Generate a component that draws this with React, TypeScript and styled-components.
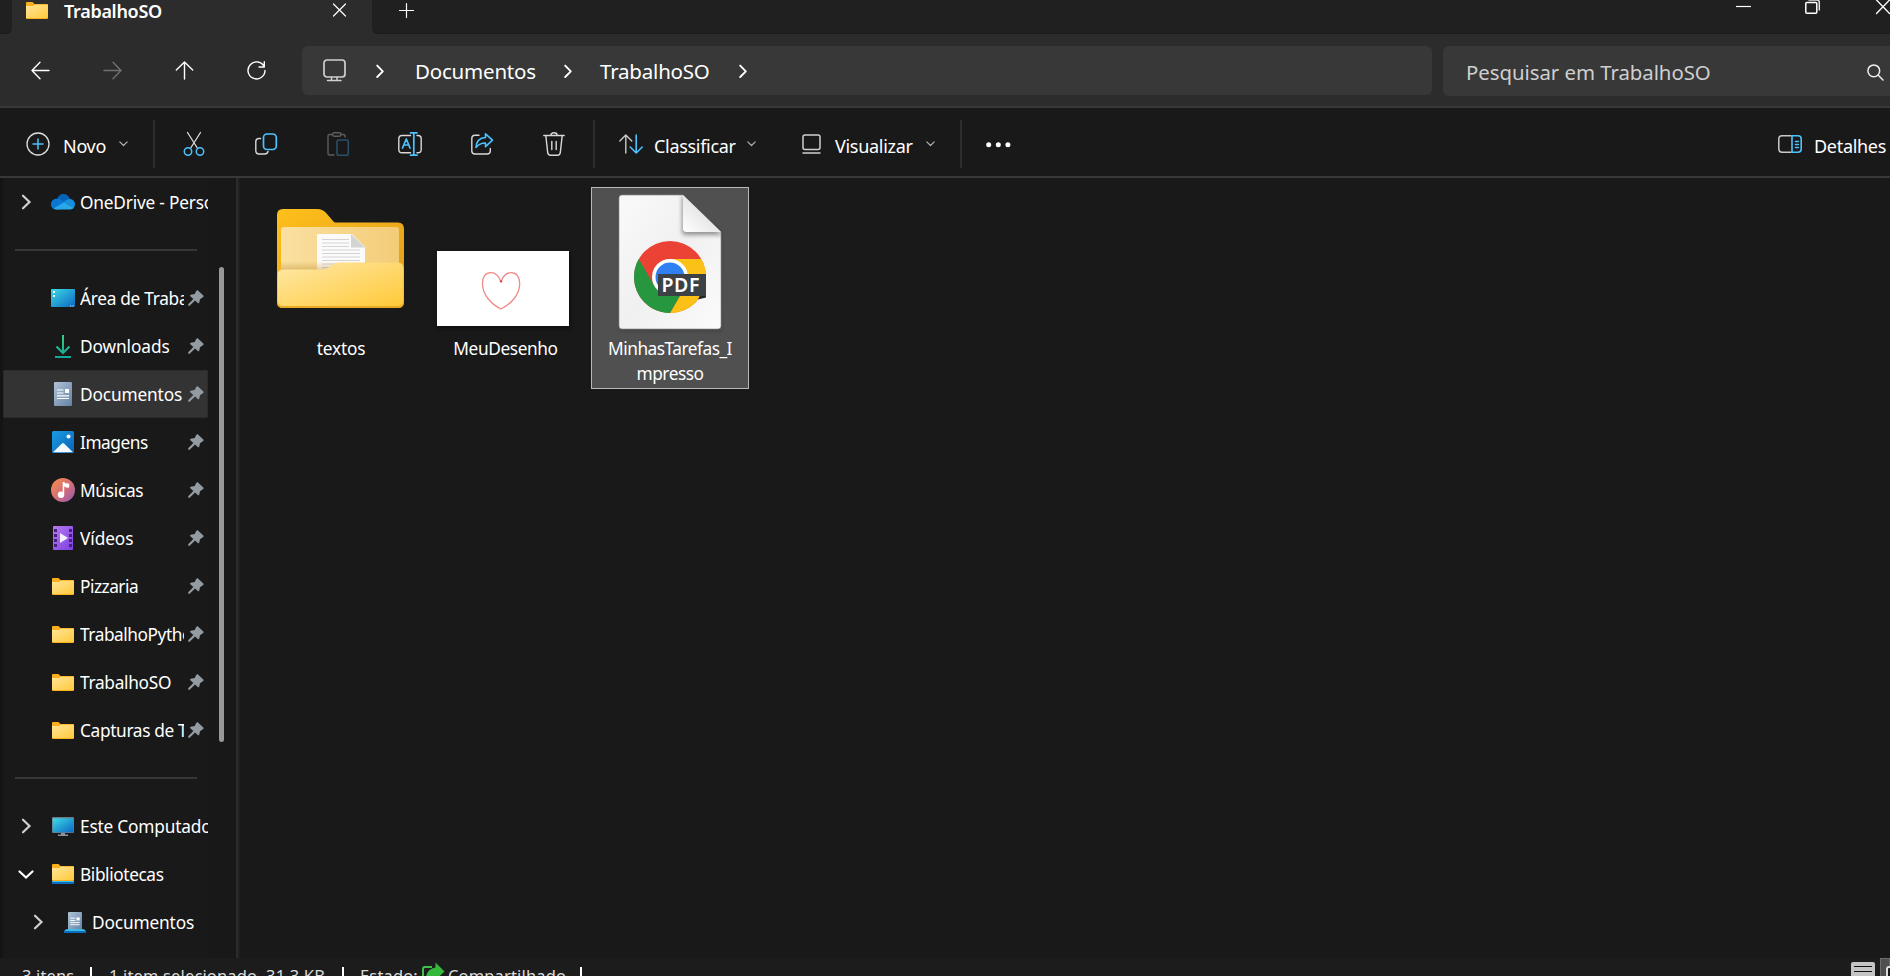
import React from 'react';
import styled, { createGlobalStyle, css } from 'styled-components';

const Global = createGlobalStyle`
  html, body { margin: 0; padding: 0; background: #191919; overflow: hidden; }
  * { box-sizing: border-box; }
  svg { display: block; flex: none; overflow: visible; }
`;

const Window = styled.div`
  display: flex;
  flex-direction: column;
  width: 1890px;
  height: 976px;
  overflow: hidden;
  background: #191919;
  color: #fff;
  font-family: 'Noto Sans', 'Open Sans', sans-serif;
  font-size: 17.3px;
  letter-spacing: -0.3px;
  white-space: nowrap;
`;

/* ---------- title bar ---------- */
const TitleBar = styled.header`
  display: flex;
  height: 34px;
  flex: none;
  background: #2c2c2c;
`;
const StripStart = styled.div`
  width: 12px;
  background: #202020;
  border-bottom: 1px solid #1c1c1c;
  border-bottom-right-radius: 6px;
`;
const Tab = styled.div`
  display: flex;
  width: 360px;
  height: 20px;
  padding: 0 26px 0 14px;
  align-items: center;
`;
const TabTitle = styled.span`
  flex: 1;
  margin-left: 16px;
  padding-top: 1px;
  font-weight: 600;
  font-size: 18px;
  letter-spacing: -0.3px;
`;
const Strip = styled.div`
  flex: 1;
  display: flex;
  align-items: flex-start;
  background: #202020;
  border-bottom: 1px solid #1c1c1c;
  border-bottom-left-radius: 6px;
`;
const NewTab = styled.div`
  padding: 3px 0 0 27px;
`;
const WindowControls = styled.div`
  display: flex;
  align-items: flex-start;
  gap: 54px;
  width: 154px;
  margin-left: auto;
`;

/* ---------- navigation ---------- */
const NavBar = styled.nav`
  display: flex;
  align-items: flex-start;
  height: 74px;
  flex: none;
  padding-top: 12px;
  background: #2c2c2c;
  border-bottom: 2px solid #393939;
`;
const NavButtons = styled.div`
  display: flex;
  width: 302px;
  height: 49px;
  padding: 0 0 0 4.5px;
  align-items: center;
`;
const NavButton = styled.div`
  display: flex;
  justify-content: center;
  width: 72px;
`;
const AddressBox = styled.div`
  display: flex;
  align-items: center;
  width: 1130px;
  height: 49px;
  padding-left: 21px;
  border-radius: 6px;
  background: #383838;
  font-size: 20.5px;
  letter-spacing: -0.2px;
`;
const CrumbArrow = styled.div<{ $before: number }>`
  margin-left: ${p => p.$before}px;
`;
const Crumb = styled.span<{ $width: number; $left: number }>`
  width: ${p => p.$width}px;
  margin-left: ${p => p.$left}px;
`;
const SearchBox = styled.div`
  display: flex;
  align-items: center;
  flex: 1;
  height: 50px;
  margin-left: 11px;
  padding: 2px 6px 0 23px;
  justify-content: space-between;
  border-radius: 6px 0 0 6px;
  background: #383838;
  color: #cfcfcf;
  font-size: 20.4px;
  letter-spacing: -0.05px;
`;

/* ---------- command bar ---------- */
const CommandBar = styled.div`
  display: flex;
  align-items: center;
  height: 70px;
  flex: none;
  padding: 4px 0 0 26px;
  border-bottom: 2px solid #383838;
  font-size: 18px;
  letter-spacing: -0.3px;
`;
const Command = styled.div<{ $width: number; $left?: number }>`
  display: flex;
  align-items: center;
  width: ${p => p.$width}px;
  padding-left: ${p => p.$left || 0}px;
`;
const CommandLabel = styled.span<{ $width?: number; $gap: number }>`
  width: ${p => (p.$width ? `${p.$width}px` : 'auto')};
  margin-left: ${p => p.$gap}px;
  padding-top: 4px;
`;
const IconCommand = styled.div`
  display: flex;
  justify-content: center;
  align-items: center;
  flex: none;
  width: 72px;
`;
const Divider = styled.div`
  width: 2px;
  height: 48px;
  background: #2d2d2d;
`;
const IconGroup = styled.div`
  display: flex;
  padding: 0 3px;
  width: 438px;
`;
const DetailsCommand = styled.div`
  display: flex;
  align-items: center;
  margin-left: auto;
  width: 112px;
`;

/* ---------- body ---------- */
const Body = styled.main`
  display: flex;
  flex: 1;
  min-height: 0;
`;
const Sidebar = styled.aside`
  display: flex;
  width: 240px;
  height: 780px;
  border-left: 3px solid #141414;
`;
const Tree = styled.div`
  width: 205px;
`;
const Row = styled.div<{ $selected?: boolean; $indent?: boolean }>`
  display: flex;
  align-items: center;
  height: 48px;
  overflow: hidden;
  padding-left: ${p => (p.$indent ? 12 : 0)}px;
  ${p => p.$selected && css`
    background: #333;
    border-radius: 2px;
    box-shadow: inset 0 0 0 1px #2b2b2b;
  `}
`;
const Expander = styled.div`
  display: flex;
  justify-content: center;
  width: 45px;
`;
const RowIcon = styled.div`
  display: flex;
  justify-content: center;
  width: 30px;
  flex: none;
`;
const RowLabel = styled.span<{ $tracking?: number }>`
  flex: 1;
  min-width: 0;
  margin-left: 2px;
  padding-top: 1px;
  overflow: hidden;
  letter-spacing: ${p => p.$tracking ?? -0.3}px;
`;
const PinSlot = styled.div`
  width: 24px;
  padding-left: 4px;
`;
const TreeDivider = styled.div`
  height: 48px;
  padding: 23px 11px 0 12px;
  &::before {
    content: '';
    display: block;
    height: 2px;
    background: #373737;
  }
`;
const ScrollTrack = styled.div`
  width: 27px;
  padding: 89px 0 0 11px;
  background: #181818;
`;
const ScrollThumb = styled.div`
  width: 5px;
  height: 475px;
  border-radius: 3px;
  background: #989898;
`;
const Splitter = styled.div`
  width: 5px;
  border-left: 1px solid #151515;
  border-right: 2px solid #202020;
  background: #2d2d2d;
`;
const Files = styled.section`
  display: flex;
  align-items: flex-start;
  gap: 6.5px;
  flex: 1;
  padding: 9px 0 0 22px;
`;
const Tile = styled.figure<{ $selected?: boolean }>`
  display: flex;
  flex-direction: column;
  align-items: center;
  width: 158px;
  height: 202px;
  margin: 0;
  border: 1px solid ${p => (p.$selected ? '#b9b9b9' : 'transparent')};
  background: ${p => (p.$selected ? '#505050' : 'transparent')};
`;
const Preview = styled.div<{ $bottom: number; $shift?: number }>`
  display: flex;
  flex-direction: column;
  justify-content: flex-end;
  height: 147px;
  padding-bottom: ${p => p.$bottom}px;
  margin-right: ${p => p.$shift || 0}px;
`;
const Thumb = styled.div`
  display: flex;
  width: 132px;
  height: 75px;
  background: #fff;
  box-shadow: 1px 2px 4px rgba(0, 0, 0, 0.45);
`;
const Caption = styled.figcaption<{ $tracking?: number }>`
  width: 136px;
  padding-top: 1px;
  line-height: 25px;
  text-align: center;
  white-space: pre-line;
  letter-spacing: ${p => p.$tracking ?? -0.2}px;
`;

/* ---------- status bar ---------- */
const StatusBar = styled.footer`
  display: flex;
  height: 18px;
  flex: none;
  overflow: hidden;
  background: #1c1c1c;
  color: #dadada;
  font-size: 16.5px;
  letter-spacing: 0.15px;
`;
const StatusText = styled.span<{ $width: number; $left: number }>`
  width: ${p => p.$width}px;
  margin-left: ${p => p.$left}px;
  padding-top: 6px;
  line-height: 24px;
  white-space: pre;
`;
const StatusMark = styled.div`
  width: 2px;
  height: 22px;
  margin-top: 9px;
  background: #fff;
`;
const ShareSlot = styled.div`
  width: 24px;
  padding-top: 6px;
`;
const ViewModes = styled.div`
  display: flex;
  margin-left: auto;
`;
const ListMode = styled.div`
  width: 29px;
  padding-top: 4px;
`;
const TileMode = styled.div`
  width: 10px;
  height: 30px;
  padding: 7px 0 0 5px;
  background: #4f4f4f;
  border: 1px solid #6c6c6c;
`;

/* ---------- icons ---------- */
const BLUE = '#4cc2ff';
const stroke = (color: string, width = 1.4) => ({
  fill: 'none', stroke: color, strokeWidth: width,
  strokeLinecap: 'round' as const, strokeLinejoin: 'round' as const,
});

const Close = () => (
  <svg width="13" height="13" viewBox="0 0 13 13"><path {...stroke('#fff', 1.2)} d="M.5 0l12 12M12.5 0l-12 12" /></svg>
);
const Chevron = ({ down = false, color = '#fff' }) => (
  <svg width="14" height="14" viewBox="0 0 14 14">
    <path {...stroke(color, 2.2)} strokeLinejoin="miter" d={down ? 'M.5 4.5L7 10.5l6.5-6' : 'M4 .7L10.5 7L4 13.3'} />
  </svg>
);
const SmallChevron = () => (
  <svg width="9" height="6" viewBox="0 0 9 6"><path {...stroke('#b0b0b0', 1.2)} d="M.8.8l3.7 3.7L8.2.8" /></svg>
);
const CrumbChevron = () => (
  <svg width="8" height="14" viewBox="0 0 8 14"><path {...stroke('#fff', 1.9)} d="M1.2 1.6L6.8 7.400l-5.600 5.600" /></svg>
);

const Folder = ({ library = false }) => (
  <svg width="22" height={library ? 20 : 17} viewBox={library ? '0 0 22 20' : '0 0 22 17'}>
    <defs>
      <linearGradient id="fs" x1="0" y1="0" x2="1" y2="1">
        <stop offset="0" stopColor="#ffe59a" /><stop offset="1" stopColor="#ffc93b" />
      </linearGradient>
    </defs>
    <path fill="#f9b01c" d="M0 1Q0 0 1 0H6.5L8.5 2H21Q22 2 22 3V16Q22 17 21 17H1Q0 17 0 16Z" />
    <path fill="url(#fs)" d="M0 4H7L9 2.7H22V15.2Q22 16 21 16H1Q0 16 0 15.2Z" />
    {library && <><path fill="#36c0f0" d="M0 17h22v1H0z" /><path fill="#0b6cc0" d="M0 18h22v2H0z" /></>}
  </svg>
);

const OneDrive = () => (
  <svg width="24" height="16" viewBox="0 0 24 16">
    <path fill="#0364b8" d="M6 6C7 1.8 9.5 0 12.5 0c3.2 0 5.5 2 6.5 5l-5 5Z" />
    <path fill="#0a77d5" d="M5.5 15.5C2 15.5 0 13.5 0 10.3 0 7 2.5 4.6 5.6 4.7c1.5-.2 3 .3 4 1L16 9.5l-8 6Z" />
    <path fill="#1490df" d="M19.2 5c2.8.2 4.8 2.4 4.8 5.3 0 1.5-.5 2.700-1.300 3.600L12.600 8c2-1.800 4-3 6.600-3Z" />
    <path fill="#28a8ea" d="M2.500 14.600L13 8.200l9.800 5.600c-.8 1.100-2 1.700-3.600 1.700H5.500c-1.200 0-2.200-.3-3-.9Z" />
  </svg>
);
const Desktop = () => (
  <svg width="24" height="18" viewBox="0 0 24 18">
    <defs><linearGradient id="dk" x1="0" y1="0" x2="1" y2="1"><stop offset="0" stopColor="#3ddbe6" /><stop offset="1" stopColor="#0b67c2" /></linearGradient></defs>
    <rect width="24" height="18" rx="1" fill="url(#dk)" />
    <path fill="#fff" d="M2 2h2v2H2zM2 6h2v2H2z" /><path fill="#fff" opacity=".8" d="M19 16.5h1.200v1H19zM21.300 16.500h1.200v1h-1.200z" />
  </svg>
);
const Download = () => (
  <svg width="16" height="23" viewBox="0 0 16 23">
    <defs><linearGradient id="dl" x1="0" y1="0" x2="0" y2="23" gradientUnits="userSpaceOnUse"><stop offset="0" stopColor="#35d07c" /><stop offset="1" stopColor="#12a79d" /></linearGradient></defs>
    <path fill="none" stroke="url(#dl)" strokeWidth="2" d="M8 0V18M1.500 11.500L8 18l6.500-6.500M0 22h16" />
  </svg>
);
const DocBody = () => (
  <>
    <rect width="18" height="24" rx="1.3" fill="url(#dc)" />
    <path stroke="#fff" strokeWidth="1.2" d="M3 8h6.500M3 11h6.500M3 13.800h12M3 16.500h12" />
    <rect x="11" y="7" width="4" height="4" fill="#fff" />
  </>
);
const Doc = () => (
  <svg width="18" height="24" viewBox="0 0 18 24">
    <defs><linearGradient id="dc" x1="0" y1="0" x2="1" y2="1"><stop offset="0" stopColor="#afc3d8" /><stop offset="1" stopColor="#6482a5" /></linearGradient></defs>
    <DocBody />
  </svg>
);
const DocLibrary = () => (
  <svg width="22" height="21" viewBox="0 0 22 21">
    <svg x="4" y="0" width="14" height="18.5" viewBox="0 0 18 24" preserveAspectRatio="none"><DocBody /></svg>
    <path fill="#36c0f0" d="M2 17.300h18l2 2H0z" /><path fill="#0b6cc0" d="M0 19h22v2H0z" />
  </svg>
);
const Picture = () => (
  <svg width="22" height="22" viewBox="0 0 22 22">
    <defs><linearGradient id="pc" x1="0" y1="0" x2="1" y2="1"><stop offset="0" stopColor="#1b9de2" /><stop offset="1" stopColor="#0a62b8" /></linearGradient></defs>
    <rect width="22" height="22" rx="1.5" fill="url(#pc)" />
    <circle cx="16.5" cy="5.5" r="2" fill="#fff" /><path fill="#f4faff" d="M1 21.300L10 12.600q1-1 2 0L21 21.300Z" />
  </svg>
);
const Music = () => (
  <svg width="24" height="24" viewBox="0 0 24 24">
    <defs><linearGradient id="ms" x1="0" y1="0" x2="1" y2="1"><stop offset=".1" stopColor="#f0894f" /><stop offset=".55" stopColor="#d36d79" /><stop offset="1" stopColor="#9058b8" /></linearGradient></defs>
    <circle cx="12" cy="12" r="12" fill="url(#ms)" /><circle cx="10" cy="16.8" r="3.2" fill="#fff" />
    <path fill="#fff" d="M11.700 4h1.500q.5 2 5 1.500v4q-3.500.5-5-1V17h-1.500Z" />
  </svg>
);
const Video = () => (
  <svg width="20" height="24" viewBox="0 0 20 24">
    <defs><linearGradient id="vd" x1="0" y1="0" x2="1" y2="1"><stop offset="0" stopColor="#b77af0" /><stop offset="1" stopColor="#7c3fe0" /></linearGradient></defs>
    <rect width="20" height="24" rx="1" fill="url(#vd)" />
    {[3, 8, 13, 18].map(y => <path key={y} fill="#45207c" d={`M1 ${y}h3v3H1zM16 ${y}h3v3H16z`} />)}
    <path fill="#f5efff" d="M7 7v10l8-5z" />
  </svg>
);
const Computer = () => (
  <svg width="22" height="19" viewBox="0 0 22 19">
    <rect width="22" height="16" rx="1" fill="#6d7a87" /><rect x=".7" y="1.3" width="20.6" height="14" fill="url(#dk)" />
    <path fill="#8a949e" d="M9 16h4v1.500h3V19H6v-1.500h3z" />
  </svg>
);
const Pin = () => (
  <svg width="16" height="16" viewBox="0 0 16 16">
    <path fill="#929ba1" d="M8.600.6Q9.300 0 10 .5L15.300 5.400Q16 6.200 15.200 7L12 9.200 11.200 12.700Q10.700 13.600 9.800 13L7 10.400 1.700 15.700.3 15.700.2 14.300 5.300 9 2.100 6Q1.700 5.200 2.700 4.800L6.600 4Z" />
  </svg>
);

const BigFolder = () => (
  <svg width="127" height="99" viewBox="0 0 127 99">
    <defs>
      <linearGradient id="bb" x1="0" y1="0" x2="1" y2="1"><stop offset="0" stopColor="#ffc01b" /><stop offset="1" stopColor="#dd9a1c" /></linearGradient>
      <linearGradient id="bi" x1="0" y1="0" x2="1" y2="0"><stop offset="0" stopColor="#fae0a1" /><stop offset="1" stopColor="#f4cc78" /></linearGradient>
      <linearGradient id="bf" x1="0" y1="0" x2="1" y2="1"><stop offset="0" stopColor="#ffe9a8" /><stop offset="1" stopColor="#ffc938" /></linearGradient>
      <linearGradient id="bs" x1="0" y1="0" x2="0" y2="1"><stop offset=".8" stopColor="#b88628" stopOpacity="0" /><stop offset="1" stopColor="#b88628" stopOpacity=".4" /></linearGradient>
    </defs>
    <path fill="url(#bb)" d="M0 6Q0 0 6 0H40Q46 0 50 5L56 12Q57 13.500 59 13.500H121Q127 13.500 127 20V92Q127 99 121 99H6Q0 99 0 93Z" />
    <rect x="4" y="18" width="118" height="60" rx="3" fill="url(#bi)" />
    <path fill="#fbfbfb" d="M40 25H75L88 38V65H40Z" /><path fill="#d4d4d4" d="M74 25L88 38.500H74Z" />
    <path stroke="#d4d4d4" strokeWidth="1" d="M45 30.500H72M45 34H72M45 37.500H72M45 41H83M45 44.500H83M45 48H83M45 51.500H83M45 55H83M45 58.500H83" />
    <rect x="4" y="18" width="118" height="43" fill="url(#bs)" />
    <path fill="#e9aa26" d="M0 66Q0 61 6 61H46Q50 61 54 57Q58 54 62 54H121Q127 54 127 60V93Q127 99 121 99H6Q0 99 0 93Z" />
    <path fill="url(#bf)" d="M.5 66Q.5 60.500 6 60.500H46Q50 60.500 54 56.500Q58 53.500 62 53.500H121Q126.500 53.500 126.500 60V91Q126.500 97 121 97H6Q.5 97 .5 91Z" />
  </svg>
);
const Heart = () => (
  <svg width="132" height="75" viewBox="0 0 132 75">
    <path {...stroke('#f08a8a', 1.3)} d="M64 31C62 25 59 21.700 54 21.700C48.500 21.700 45.300 26 45.500 33C45.800 44 54 53 64 58C74 53 82.500 44 82.700 33C82.800 26 79.500 21.700 74 21.700C69 21.700 66 25 64 31Z" />
    <circle cx="64" cy="30.3" r="1.2" fill="#e65050" />
  </svg>
);

const PdfText = styled.text`
  font: 600 19.5px 'Noto Sans', sans-serif;
  letter-spacing: 0.6px;
  fill: #fff;
`;
const ChromePdf = () => (
  <svg width="102" height="134" viewBox="0 0 102 134">
    <defs>
      <linearGradient id="pg" x1="0" y1="0" x2="1" y2="1"><stop offset="0" stopColor="#fafafa" /><stop offset=".5" stopColor="#f0f0f0" /><stop offset="1" stopColor="#fbfbfb" /></linearGradient>
      <linearGradient id="pf" x1="0" y1="1" x2=".7" y2=".3"><stop offset="0" stopColor="#fff" /><stop offset="1" stopColor="#dedede" /></linearGradient>
      <filter id="blur" x="-30%" y="-30%" width="160%" height="160%"><feGaussianBlur stdDeviation="2" /></filter>
      <clipPath id="page"><path d="M3 0H64L102 37V131Q102 134 99 134H3Q0 134 0 131V3Q0 0 3 0Z" /></clipPath>
    </defs>
    <path fill="#222" opacity=".5" filter="url(#blur)" d="M2 4H64L101 38V135H2Z" />
    <path fill="url(#pg)" stroke="#8c8c8c" strokeWidth=".7" d="M3 0H64L102 37V131Q102 134 99 134H3Q0 134 0 131V3Q0 0 3 0Z" />
    <g clipPath="url(#page)"><path fill="#555" opacity=".6" filter="url(#blur)" d="M63 0V37Q63 40 67 40H104Z" /></g>
    <path fill="url(#pf)" d="M64 0V33.500Q64 37 67.500 37H102Z" />
    <circle cx="51" cy="82" r="36" fill="#ea4335" />
    <path fill="#fbc116" d="M51 64H82.200A36 36 0 0 1 51 118L66.600 91Z" />
    <path fill="#26963f" d="M35.400 91L19.800 64A36 36 0 0 0 51 118L66.600 91Z" />
    <circle cx="51" cy="82" r="18" fill="#fff" /><circle cx="51" cy="82" r="14.5" fill="#3080f2" />
    <path fill="#24272a" d="M79 104.500L87 102.500V100H81Z" />
    <path fill="#3c4145" d="M39 79H87V101H39Z" />
    <PdfText x="42.5" y="97">PDF</PdfText>
  </svg>
);

const PlusCircle = () => (
  <svg width="24" height="24" viewBox="0 0 24 24"><circle cx="12" cy="12" r="11" {...stroke('#dedede', 1.3)} /><path {...stroke(BLUE, 1.5)} d="M12 7v10M7 12h10" /></svg>
);
const Cut = () => (
  <svg width="22" height="24" viewBox="0 0 22 24">
    <path {...stroke('#dcdcdc', 1.3)} d="M4.500.5L14.300 16M17.500.5L7.700 16" />
    <circle cx="5" cy="19.5" r="3.7" {...stroke(BLUE, 1.5)} /><circle cx="17" cy="19.5" r="3.7" {...stroke(BLUE, 1.5)} />
  </svg>
);
const Copy = () => (
  <svg width="22" height="22" viewBox="0 0 22 22">
    <path {...stroke('#d8d8d8', 1.4)} d="M5.500 5.500H4Q.8 5.500.8 8.500V17.500Q.8 21 4 21H9.500Q12.500 21 13 18.500" />
    <rect x="8.5" y="1" width="12.8" height="15.5" rx="3.5" {...stroke(BLUE, 1.7)} />
  </svg>
);
const Paste = () => (
  <svg width="22" height="24" viewBox="0 0 22 24">
    <path {...stroke('#5d5d5d', 1.4)} d="M5 2.500H2.500Q1 2.500 1 4V21.500Q1 23 2.500 23H7M14 2.500H16.500Q18 2.500 18 4V5" />
    <rect x="5.5" y=".8" width="8.5" height="3.4" rx="1.7" {...stroke('#5d5d5d', 1.4)} />
    <rect x="10" y="8" width="11.3" height="15.2" rx="1.5" {...stroke('#29536a', 1.5)} />
  </svg>
);
const Rename = () => (
  <svg width="24" height="24" viewBox="0 0 24 24">
    <path {...stroke('#d8d8d8', 1.4)} d="M12.500 3.500H4Q.8 3.500.8 6.500V17.500Q.8 20.800 4 20.800H12.500M19 3.500H20Q23.200 3.500 23.200 6.500V17.500Q23.200 20.800 20 20.800H19" />
    <path {...stroke(BLUE, 1.7)} d="M12.500.8H19M12.500 23.200H19M15.800.8V23.200M4.500 16L8.300 7L12 16M5.800 13H10.800" />
  </svg>
);
const Share = () => (
  <svg width="22" height="22" viewBox="0 0 22 22">
    <path {...stroke('#d8d8d8', 1.4)} d="M8 2.300H4Q.8 2.300.8 5.500V18Q.8 21 4 21H16Q19.300 21 19.300 18V15.500" />
    <path {...stroke(BLUE, 1.6)} d="M14.500.8L21.500 7.200L14.500 13.700V10Q8.500 10 5 14.500Q5.500 5 14.500 4.500Z" />
  </svg>
);
const Trash = () => (
  <svg width="22" height="24" viewBox="0 0 22 24">
    <path {...stroke('#d8d8d8', 1.4)} d="M.8 3.500H21.200M7.800 3.500Q7.800.8 11 .8T14.200 3.500M2.800 3.500L4.700 20.700Q5 23.200 7.500 23.200H14.500Q17 23.200 17.300 20.700L19.200 3.500M8.800 9.500V17.500M13.200 9.500V17.500" />
  </svg>
);
const Sort = () => (
  <svg width="24" height="20" viewBox="0 0 24 20">
    <path {...stroke('#c8c8c8', 1.4)} d="M6.800 19V1M.8 7L6.800 1L12.800 7" /><path {...stroke(BLUE, 1.6)} d="M17.200 1V19M11.200 13L17.200 19L23.200 13" />
  </svg>
);
const View = () => (
  <svg width="19" height="20" viewBox="0 0 19 20">
    <rect x="1" y="1" width="17" height="14.5" rx="2" {...stroke('#d0d0d0', 1.5)} /><path {...stroke('#d0d0d0', 1.5)} d="M1 19H18" />
  </svg>
);
const Dots = () => (
  <svg width="25" height="5" viewBox="0 0 25 5">{[2.7, 12.3, 21.9].map(x => <circle key={x} cx={x} cy="2.8" r="2.5" fill="#fff" />)}</svg>
);
const Details = () => (
  <svg width="24" height="18" viewBox="0 0 24 18">
    <path {...stroke('#c8c8c8', 1.5)} d="M13 .8H4Q.8.8.8 4V14Q.8 17.200 4 17.200H13" />
    <path {...stroke(BLUE, 1.6)} d="M14 .8H20Q23.200.8 23.200 4V14Q23.200 17.200 20 17.200H14ZM17.500 6.500H20.300M17.500 9.500H20.300M17.500 12.500H20.300" />
  </svg>
);
const Arrow = ({ angle = 0, color = '#fff' }) => (
  <svg width="19" height="19" viewBox="0 0 19 19"><path transform={`rotate(${angle} 9.5 9.5)`} {...stroke(color, 1.4)} d="M18 9.500H1M9 1.300L1 9.500L9 17.700" /></svg>
);
const Refresh = () => (
  <svg width="19" height="19" viewBox="0 0 19 19"><path {...stroke('#fff', 1.4)} d="M17.300 6A8.500 8.500 0 1 0 18 9.500M17.300.8V6H12" /></svg>
);
const Monitor = () => (
  <svg width="23" height="23" viewBox="0 0 23 23">
    <rect x="1" y="1" width="21" height="17" rx="3" {...stroke('#d0d0d0', 1.7)} /><path {...stroke('#d0d0d0', 1.5)} d="M8.500 18.500V21M14 18.500V21M4.500 21.500H18" />
  </svg>
);
const Magnifier = () => (
  <svg width="17" height="17" viewBox="0 0 17 17"><circle cx="6.8" cy="6.8" r="5.9" {...stroke('#eee', 1.5)} /><path {...stroke('#eee', 1.5)} d="M11.300 11.300L16 16" /></svg>
);
const ShareBadge = () => (
  <svg width="23" height="20" viewBox="0 0 23 20">
    <path fill="none" stroke="#3fc04c" strokeWidth="2" d="M10 3H3Q1 3 1 5V20" /><path fill="#35b83c" d="M13.500-1.500L22.500 7.500L13.500 16V12Q7 12 4 18Q3 5 13.500 3.500Z" />
  </svg>
);
const ListIcon = () => (
  <svg width="24" height="18" viewBox="0 0 24 18"><rect width="24" height="18" rx="2" fill="#c4c4c4" /><path stroke="#111" strokeWidth="1.2" d="M3 4.500H21M3 9.500H21" /></svg>
);

type Item = { label: string; icon: React.ReactNode; selected?: boolean; tracking?: number };
const pinned: Item[] = [
  { label: 'Área de Trabalho', icon: <Desktop /> },
  { label: 'Downloads', icon: <Download />, tracking: -0.1 },
  { label: 'Documentos', icon: <Doc />, selected: true, tracking: -0.15 },
  { label: 'Imagens', icon: <Picture />, tracking: -0.45 },
  { label: 'Músicas', icon: <Music /> },
  { label: 'Vídeos', icon: <Video />, tracking: -0.1 },
  { label: 'Pizzaria', icon: <Folder />, tracking: -0.5 },
  { label: 'TrabalhoPython', icon: <Folder />, tracking: -0.45 },
  { label: 'TrabalhoSO', icon: <Folder /> },
  { label: 'Capturas de Tela', icon: <Folder />, tracking: -0.35 },
];

const TreeRow = ({ label, icon, open, indent, tracking }: Item & { open?: boolean; indent?: boolean }) => (
  <Row $indent={indent}>
    <Expander><Chevron down={open} color={open ? '#fff' : '#d0d0d0'} /></Expander>
    <RowIcon>{icon}</RowIcon>
    <RowLabel $tracking={tracking}>{label}</RowLabel>
  </Row>
);

export default function App() {
  return (
    <Window>
      <Global />
      <TitleBar>
        <StripStart />
        <Tab>
          <Folder />
          <TabTitle>TrabalhoSO</TabTitle>
          <Close />
        </Tab>
        <Strip>
          <NewTab>
            <svg width="15" height="15" viewBox="0 0 15 15"><path {...stroke('#fff', 1.2)} d="M7.500.5V14.500M.5 7.500H14.500" /></svg>
          </NewTab>
          <WindowControls>
            <svg width="15" height="14" viewBox="0 0 15 14"><path stroke="#fff" strokeWidth="1.2" d="M0 6.500H15" /></svg>
            <svg width="15" height="14" viewBox="0 0 15 14">
              <rect x=".8" y="2.5" width="11" height="10.8" rx="1" {...stroke('#fff', 1.5)} />
              <path {...stroke('#e0e0e0', 1.5)} d="M4 0H12Q14.300 0 14.300 2.500V10" />
            </svg>
            <svg width="15" height="14" viewBox="0 0 15 14"><path {...stroke('#fff', 1.3)} d="M2.500 0L15.500 13.500M15.500 0L2.500 13.500" /></svg>
          </WindowControls>
        </Strip>
      </TitleBar>

      <NavBar>
        <NavButtons>
          <NavButton><Arrow /></NavButton>
          <NavButton><Arrow angle={180} color="#707070" /></NavButton>
          <NavButton><Arrow angle={90} /></NavButton>
          <NavButton><Refresh /></NavButton>
        </NavButtons>
        <AddressBox>
          <Monitor />
          <CrumbArrow $before={30}><CrumbChevron /></CrumbArrow>
          <Crumb $left={31} $width={124}>Documentos</Crumb>
          <CrumbArrow $before={25}><CrumbChevron /></CrumbArrow>
          <Crumb $left={28} $width={111}>TrabalhoSO</Crumb>
          <CrumbArrow $before={28}><CrumbChevron /></CrumbArrow>
        </AddressBox>
        <SearchBox>Pesquisar em TrabalhoSO<Magnifier /></SearchBox>
      </NavBar>

      <CommandBar>
        <Command $width={127}>
          <PlusCircle />
          <CommandLabel $gap={13} $width={56}>Novo</CommandLabel>
          <SmallChevron />
        </Command>
        <Divider />
        <IconGroup>
          <IconCommand><Cut /></IconCommand>
          <IconCommand><Copy /></IconCommand>
          <IconCommand><Paste /></IconCommand>
          <IconCommand><Rename /></IconCommand>
          <IconCommand><Share /></IconCommand>
          <IconCommand><Trash /></IconCommand>
        </IconGroup>
        <Divider />
        <Command $width={184} $left={24}>
          <Sort />
          <CommandLabel $gap={11} $width={93}>Classificar</CommandLabel>
          <SmallChevron />
        </Command>
        <Command $width={181} $left={23}>
          <View />
          <CommandLabel $gap={14} $width={91}>Visualizar</CommandLabel>
          <SmallChevron />
        </Command>
        <Divider />
        <Command $width={60} $left={24}><Dots /></Command>
        <DetailsCommand>
          <Details />
          <CommandLabel $gap={12}>Detalhes</CommandLabel>
        </DetailsCommand>
      </CommandBar>

      <Body>
        <Sidebar>
          <Tree>
            <TreeRow label="OneDrive - Personal" icon={<OneDrive />} tracking={-0.2} />
            <TreeDivider />
            {pinned.map(item => (
              <Row key={item.label} $selected={item.selected}>
                <Expander />
                <RowIcon>{item.icon}</RowIcon>
                <RowLabel $tracking={item.tracking}>{item.label}</RowLabel>
                <PinSlot><Pin /></PinSlot>
              </Row>
            ))}
            <TreeDivider />
            <TreeRow label="Este Computador" icon={<Computer />} tracking={-0.2} />
            <TreeRow label="Bibliotecas" icon={<Folder library />} tracking={-0.4} open />
            <TreeRow label="Documentos" icon={<DocLibrary />} tracking={-0.15} indent />
          </Tree>
          <ScrollTrack><ScrollThumb /></ScrollTrack>
          <Splitter />
        </Sidebar>
        <Files>
          <Tile>
            <Preview $bottom={27} $shift={2}><BigFolder /></Preview>
            <Caption>textos</Caption>
          </Tile>
          <Tile>
            <Preview $bottom={9} $shift={5}><Thumb><Heart /></Thumb></Preview>
            <Caption $tracking={-0.4}>MeuDesenho</Caption>
          </Tile>
          <Tile $selected>
            <Preview $bottom={6}><ChromePdf /></Preview>
            <Caption $tracking={-0.5}>{'MinhasTarefas_I\nmpresso'}</Caption>
          </Tile>
        </Files>
      </Body>

      <StatusBar>
        <StatusText $left={22} $width={68}>3 itens</StatusText>
        <StatusMark />
        <StatusText $left={17} $width={233}>{'1 item selecionado  31,3 KB'}</StatusText>
        <StatusMark />
        <StatusText $left={16} $width={62}>Estado:</StatusText>
        <ShareSlot><ShareBadge /></ShareSlot>
        <StatusText $left={2} $width={132}>Compartilhado</StatusText>
        <StatusMark />
        <ViewModes>
          <ListMode><ListIcon /></ListMode>
          <TileMode>
            <svg width="10" height="20" viewBox="0 0 10 20"><rect x="1" y="1" width="14" height="18" rx="2" fill="#1a1a1a" stroke="#ddd" strokeWidth="2" /></svg>
          </TileMode>
        </ViewModes>
      </StatusBar>
    </Window>
  );
}
